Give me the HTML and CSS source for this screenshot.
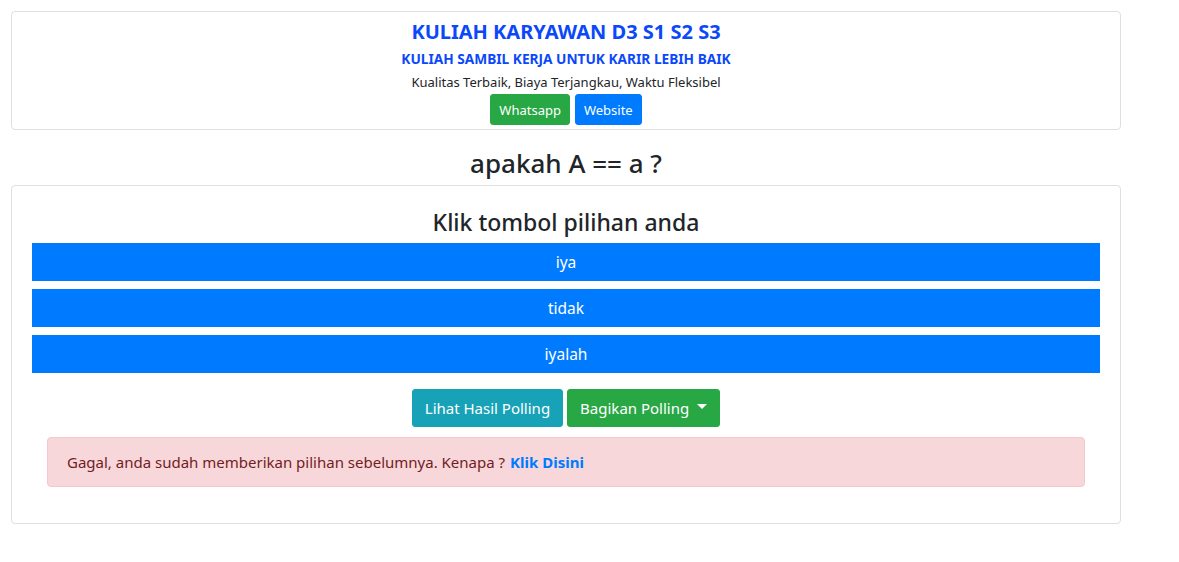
FILE: index.html
```html
<!DOCTYPE html>
<html lang="id">
<head>
<meta charset="utf-8">
<title>Polling</title>
<link rel="stylesheet" href="styles.css">
</head>
<body>
<div class="wrap">
  <div class="card promo">
    <div class="promo-title">KULIAH KARYAWAN D3 S1 S2 S3</div>
    <div class="promo-sub">KULIAH SAMBIL KERJA UNTUK KARIR LEBIH BAIK</div>
    <div class="promo-text">Kualitas Terbaik, Biaya Terjangkau, Waktu Fleksibel</div>
    <div class="promo-actions">
      <a class="btn btn-sm btn-success" href="#">Whatsapp</a>
      <a class="btn btn-sm btn-primary" href="#">Website</a>
    </div>
  </div>

  <h2 class="question">apakah A == a ?</h2>

  <div class="card poll">
    <h3 class="poll-title">Klik tombol pilihan anda</h3>
    <div class="choices">
      <button class="choice">iya</button>
      <button class="choice">tidak</button>
      <button class="choice">iyalah</button>
    </div>
    <div class="poll-actions">
      <button class="btn btn-info">Lihat Hasil Polling</button>
      <button class="btn btn-success">Bagikan Polling <span class="caret"></span></button>
    </div>
    <div class="alert">Gagal, anda sudah memberikan pilihan sebelumnya. Kenapa ? <a href="#" class="alert-link">Klik Disini</a></div>
  </div>
</div>
</body>
</html>
```

FILE: styles.css
```css
* { box-sizing: border-box; }
html, body { margin: 0; padding: 0; background: #fff; }
body {
  font-family: "Noto Sans", "Open Sans", Arial, sans-serif;
  color: #212529;
}
.wrap {
  width: 1132px;
  padding: 11px;
}
.card {
  border: 1px solid #dfdfdf;
  border-radius: 4px;
  background: #fff;
}
.promo {
  padding: 7px 0 4px;
  text-align: center;
}
.promo-title {
  font-size: 20px;
  font-weight: 700;
  line-height: 26px;
  color: #0a48fa;
  margin-bottom: 4px;
}
.promo-sub {
  font-size: 13.7px;
  font-weight: 700;
  line-height: 20px;
  color: #0a48fa;
  margin-bottom: 3px;
}
.promo-text {
  font-size: 13px;
  line-height: 20px;
  margin-bottom: 2px;
}
.promo-actions {
  display: flex;
  justify-content: center;
  gap: 5px;
}
.btn {
  display: inline-flex;
  align-items: center;
  justify-content: center;
  border: 1px solid transparent;
  border-radius: 3px;
  color: #fff;
  text-decoration: none;
  font-family: inherit;
  cursor: pointer;
}
.btn-sm {
  height: 31px;
  padding: 0 8px;
  font-size: 13px;
}
.btn-success { background: #28a745; border-color: #28a745; }
.btn-primary { background: #007bff; border-color: #007bff; }
.btn-info { background: #17a2b8; border-color: #17a2b8; }
.question {
  margin: 15px 0 4px;
  font-size: 26px;
  line-height: 36px;
  font-weight: 500;
  text-align: center;
}
.poll {
  padding: 20px 20px 36px;
}
.poll-title {
  margin: 0 0 5px;
  font-size: 23px;
  line-height: 32px;
  font-weight: 500;
  text-align: center;
}
.choices {
  display: flex;
  flex-direction: column;
  gap: 8px;
}
.choice {
  height: 38px;
  border: 0;
  background: #007bff;
  color: #fff;
  font-family: inherit;
  font-size: 15.5px;
  cursor: pointer;
}
.poll-actions {
  display: flex;
  justify-content: center;
  gap: 4px;
  margin: 16px 0 10px;
}
.poll-actions .btn {
  height: 38px;
  padding: 0 12px;
  font-size: 15px;
  border-radius: 3px;
}
.caret {
  display: inline-block;
  margin-left: 8px;
  width: 0;
  height: 0;
  border-top: 5px solid #fff;
  border-left: 5px solid transparent;
  border-right: 5px solid transparent;
  position: relative;
  top: -2px;
}
.alert {
  margin: 0 15px;
  height: 50px;
  display: flex;
  align-items: center;
  padding: 0 19px;
  background: #f8d7da;
  border: 1px solid #f5c6cb;
  border-radius: 4px;
  color: #721c24;
  font-size: 15px;
}
.alert-link {
  margin-left: 5px;
  color: #007bff;
  font-weight: 700;
  text-decoration: none;
}
```
